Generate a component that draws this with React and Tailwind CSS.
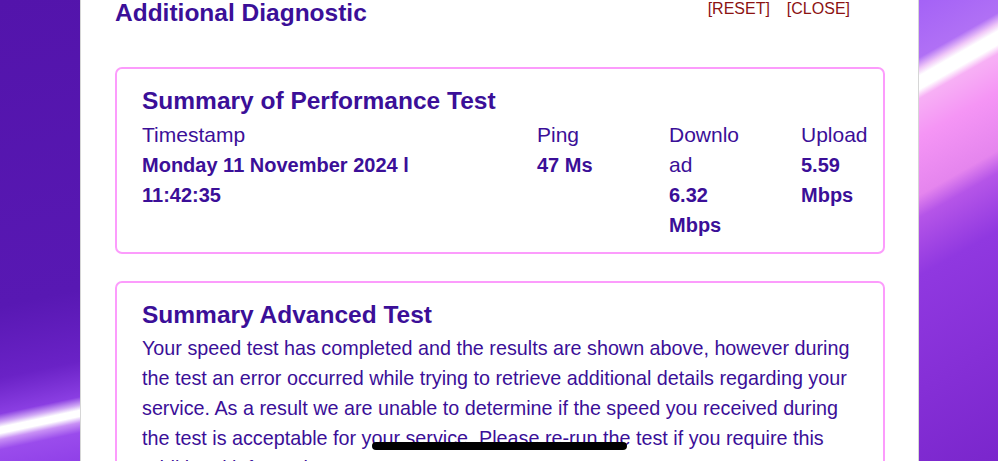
import React from "react";

function LeftWall() {
  return (
    <svg className="block w-full h-full" viewBox="0 0 80 461" preserveAspectRatio="none">
      <defs>
        <linearGradient id="lg" gradientUnits="userSpaceOnUse" x1="0" y1="0" x2="97.3" y2="457.7">
          <stop offset="0" stopColor="#5314ab" />
          <stop offset="0.64" stopColor="#5818b3" />
          <stop offset="0.79" stopColor="#6a22c6" />
          <stop offset="0.865" stopColor="#8a3ee2" />
          <stop offset="0.882" stopColor="#d0a8f5" />
          <stop offset="0.893" stopColor="#ffffff" />
          <stop offset="0.906" stopColor="#ffffff" />
          <stop offset="0.919" stopColor="#c890f5" />
          <stop offset="0.94" stopColor="#9a4cec" />
          <stop offset="1" stopColor="#9040e8" />
        </linearGradient>
      </defs>
      <rect x="0" y="0" width="80" height="461" fill="url(#lg)" />
    </svg>
  );
}

function RightWall() {
  return (
    <svg className="block w-full h-full" viewBox="0 0 79 461" preserveAspectRatio="none">
      <defs>
        <linearGradient id="rg" gradientUnits="userSpaceOnUse" x1="0" y1="0" x2="217.8" y2="382.4">
          <stop offset="0" stopColor="#a462f6" />
          <stop offset="0.114" stopColor="#b070f5" />
          <stop offset="0.136" stopColor="#f0c8f8" />
          <stop offset="0.15" stopColor="#ffffff" />
          <stop offset="0.177" stopColor="#ffffff" />
          <stop offset="0.195" stopColor="#f7b0f5" />
          <stop offset="0.27" stopColor="#f595f5" />
          <stop offset="0.386" stopColor="#e585ee" />
          <stop offset="0.43" stopColor="#b555e8" />
          <stop offset="0.545" stopColor="#9038e0" />
          <stop offset="1" stopColor="#7a26cc" />
        </linearGradient>
      </defs>
      <rect x="0" y="0" width="79" height="461" fill="url(#rg)" />
    </svg>
  );
}

function Metric({ label, value, valueWidth }) {
  return (
    <div>
      <div className="text-[21px] leading-[30px] break-words" style={{ maxWidth: valueWidth }}>
        {label}
      </div>
      <div className="text-[20px] leading-[30px] font-bold break-words" style={{ maxWidth: valueWidth }}>
        {value}
      </div>
    </div>
  );
}

export default function App() {
  return (
    <div
      className="relative w-[998px] h-[461px] overflow-hidden flex text-[#3b0f98]"
      style={{ fontFamily: '"Liberation Sans", Arial, Helvetica, sans-serif' }}
    >
      <div className="w-[80px] h-full shrink-0">
        <LeftWall />
      </div>
      <div className="w-[839px] h-full shrink-0 bg-white border-x border-[#d6d6d6] pl-[34px] pr-[33px]">
        <div className="flex justify-between items-start">
          <h1 className="text-[24.5px] leading-[26px] font-bold">Additional Diagnostic</h1>
          <div className="flex gap-[17px] text-[16px] leading-[16px] text-[#8c1212] mr-[35px] mt-[1px]">
            <span>[RESET]</span>
            <span>[CLOSE]</span>
          </div>
        </div>

        <div className="mt-[41px] border-2 border-[#fc9cfc] rounded-[7px] pl-[25px] pr-[13px] pt-[17px] pb-[12px]">
          <h2 className="text-[24.5px] leading-[30px] font-bold">Summary of Performance Test</h2>
          <div className="mt-[4px] grid grid-cols-[395px_132px_132px_1fr]">
            <Metric label="Timestamp" value="Monday 11 November 2024 l 11:42:35" valueWidth="320px" />
            <Metric label="Ping" value="47 Ms" valueWidth="76px" />
            <Metric label="Download" value="6.32 Mbps" valueWidth="76px" />
            <Metric label="Upload" value="5.59 Mbps" valueWidth="76px" />
          </div>
        </div>

        <div className="mt-[27px] border-2 border-[#fc9cfc] rounded-[7px] pl-[25px] pr-[13px] pt-[17px] pb-[12px]">
          <h2 className="text-[24.5px] leading-[30px] font-bold">Summary Advanced Test</h2>
          <p className="mt-[3px] text-[19.75px] leading-[30px]">
            Your speed test has completed and the results are shown above, however during the test an error
            occurred while trying to retrieve additional details regarding your service. As a result we are
            unable to determine if the speed you received during the test is acceptable for your service.
            Please re-run the test if you require this additional information.
          </p>
        </div>
      </div>
      <div className="flex-1 h-full">
        <RightWall />
      </div>

      <div className="absolute left-[372px] top-[442px] w-[255px] h-[8px] rounded-full bg-black" />
    </div>
  );
}
